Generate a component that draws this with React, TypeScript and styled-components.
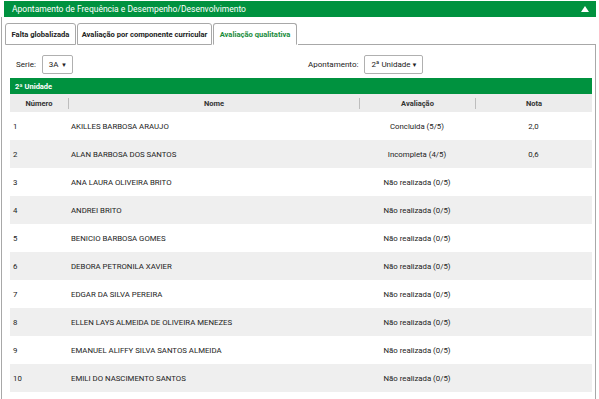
import React from 'react';
import styled, { createGlobalStyle } from 'styled-components';

const GlobalStyle = createGlobalStyle`
    html, body {
        margin: 0;
        padding: 0;
        background: #ffffff;
        font-family: Roboto, 'Liberation Sans', sans-serif;
        color: #333333;
    }
`;

interface IAluno {
    numero: number;
    nome: string;
    avaliacao: string;
    nota: string;
}

const alunos: IAluno[] = [
    { numero: 1, nome: 'AKILLES BARBOSA ARAUJO', avaliacao: 'Concluida (5/5)', nota: '2,0' },
    { numero: 2, nome: 'ALAN BARBOSA DOS SANTOS', avaliacao: 'Incompleta (4/5)', nota: '0,6' },
    { numero: 3, nome: 'ANA LAURA OLIVEIRA BRITO', avaliacao: 'Não realizada (0/5)', nota: '' },
    { numero: 4, nome: 'ANDREI BRITO', avaliacao: 'Não realizada (0/5)', nota: '' },
    { numero: 5, nome: 'BENICIO BARBOSA GOMES', avaliacao: 'Não realizada (0/5)', nota: '' },
    { numero: 6, nome: 'DEBORA PETRONILA XAVIER', avaliacao: 'Não realizada (0/5)', nota: '' },
    { numero: 7, nome: 'EDGAR DA SILVA PEREIRA', avaliacao: 'Não realizada (0/5)', nota: '' },
    { numero: 8, nome: 'ELLEN LAYS ALMEIDA DE OLIVEIRA MENEZES', avaliacao: 'Não realizada (0/5)', nota: '' },
    { numero: 9, nome: 'EMANUEL ALIFFY SILVA SANTOS ALMEIDA', avaliacao: 'Não realizada (0/5)', nota: '' },
    { numero: 10, nome: 'EMILI DO NASCIMENTO SANTOS', avaliacao: 'Não realizada (0/5)', nota: '' },
];

const tabs = [
    { label: 'Falta globalizada', width: 71 },
    { label: 'Avaliação por componente curricular', width: 135 },
    { label: 'Avaliação qualitativa', width: 84 },
];

export default function App() {
    return (
        <>
            <GlobalStyle />
            <Header>
                <Title>Apontamento de Frequência e Desempenho/Desenvolvimento</Title>
                <Caret />
            </Header>
            <Frame>
                <TabBar>
                    {tabs.map((t, i) => (
                        <Tab key={t.label} w={t.width} active={i === 2}>
                            {t.label}
                        </Tab>
                    ))}
                    <TabFill />
                </TabBar>
                <Panel>
                    <Filters>
                        <Field>
                            <Label>Serie:</Label>
                            <Select w={31}>
                                3A <Arrow>▼</Arrow>
                            </Select>
                        </Field>
                        <Field>
                            <Label>Apontamento:</Label>
                            <Select w={59}>
                                2ª Unidade <Arrow>▼</Arrow>
                            </Select>
                        </Field>
                    </Filters>
                    <Table>
                        <UnitBar>2ª Unidade</UnitBar>
                        <HeadRow>
                            <HeadCell>Número</HeadCell>
                            <HeadCell sep>Nome</HeadCell>
                            <HeadCell sep>Avaliação</HeadCell>
                            <HeadCell sep>Nota</HeadCell>
                        </HeadRow>
                        {alunos.map((a) => (
                            <Row key={a.numero} odd={a.numero % 2 === 0}>
                                <Cell>{a.numero}</Cell>
                                <Cell>{a.nome}</Cell>
                                <Cell center>{a.avaliacao}</Cell>
                                <Cell center>{a.nota}</Cell>
                            </Row>
                        ))}
                    </Table>
                </Panel>
            </Frame>
        </>
    );
}

const Header = styled.div`
    margin: 1px 3px 0 4px;
    height: 16px;
    background-color: #00923f;
    display: flex;
    align-items: center;
    justify-content: space-between;
    padding: 0 7px 0 8px;
`;

const Title = styled.div`
    color: #ffffff;
    font-size: 8.5px;
`;

const Caret = styled.div`
    width: 0;
    height: 0;
    border-left: 4px solid transparent;
    border-right: 4px solid transparent;
    border-bottom: 6px solid #ffffff;
`;

const Frame = styled.div`
    margin-left: 1px;
    margin-right: 3px;
    border-left: 1px solid #a8a8a8;
    padding: 6px 0 0 3px;
    height: 390px;
`;

const TabBar = styled.div`
    display: flex;
    align-items: flex-end;
    height: 22px;
`;

const Tab = styled.div<{ active?: boolean; w: number }>`
    width: ${(p) => p.w}px;
    height: 22px;
    box-sizing: border-box;
    margin-right: 1px;
    display: flex;
    align-items: center;
    justify-content: center;
    white-space: nowrap;
    border: 1px solid #a8a8a8;
    border-bottom: ${(p) => (p.active ? '1px solid transparent' : '1px solid #a8a8a8')};
    border-radius: 3px 3px 0 0;
    background-color: #ffffff;
    font-size: 7.6px;
    font-weight: 700;
    color: ${(p) => (p.active ? '#1a8c3c' : '#222222')};
`;

const TabFill = styled.div`
    flex: 1;
    border-bottom: 1px solid #a8a8a8;
    align-self: stretch;
`;

const Panel = styled.div`
    border-right: 1px solid #a8a8a8;
    padding: 10px 3px 0 5px;
    height: 360px;
`;

const Filters = styled.div`
    display: flex;
    height: 19px;
    margin-bottom: 4px;
    padding-left: 6px;
    & > *:first-child {
        width: 292px;
    }
`;

const Field = styled.div`
    display: flex;
    align-items: center;
`;

const Label = styled.span`
    font-size: 8px;
    color: #222222;
    margin-right: 6px;
`;

const Select = styled.div<{ w: number }>`
    width: ${(p) => p.w}px;
    height: 19px;
    box-sizing: border-box;
    border: 1px solid #b0b0b0;
    border-radius: 2px;
    display: flex;
    align-items: center;
    justify-content: space-between;
    white-space: nowrap;
    padding: 0 5px 0 6px;
    font-size: 8px;
    color: #222222;
`;

const Arrow = styled.span`
    font-size: 6px;
    color: #222222;
`;

const Table = styled.div`
    width: 582px;
`;

const UnitBar = styled.div`
    height: 16px;
    background-color: #00923f;
    color: #ffffff;
    font-size: 7.5px;
    font-weight: 700;
    display: flex;
    align-items: center;
    padding-left: 5px;
`;

const cols = '58px 291px 116px 117px';

const HeadRow = styled.div`
    display: grid;
    grid-template-columns: ${cols};
    height: 18px;
    background-color: #ececec;
    align-items: center;
`;

const HeadCell = styled.div<{ sep?: boolean }>`
    text-align: center;
    font-size: 7.5px;
    font-weight: 700;
    color: #333333;
    border-left: ${(p) => (p.sep ? '1px solid #bdbdbd' : 'none')};
    line-height: 11px;
`;

const Row = styled.div<{ odd?: boolean }>`
    display: grid;
    grid-template-columns: ${cols};
    height: 28px;
    align-items: center;
    background-color: ${(p) => (p.odd ? '#efefef' : '#ffffff')};
`;

const Cell = styled.div<{ center?: boolean }>`
    font-size: 7.8px;
    color: #222222;
    text-align: ${(p) => (p.center ? 'center' : 'left')};
    padding-left: ${(p) => (p.center ? '0' : '3px')};
`;
